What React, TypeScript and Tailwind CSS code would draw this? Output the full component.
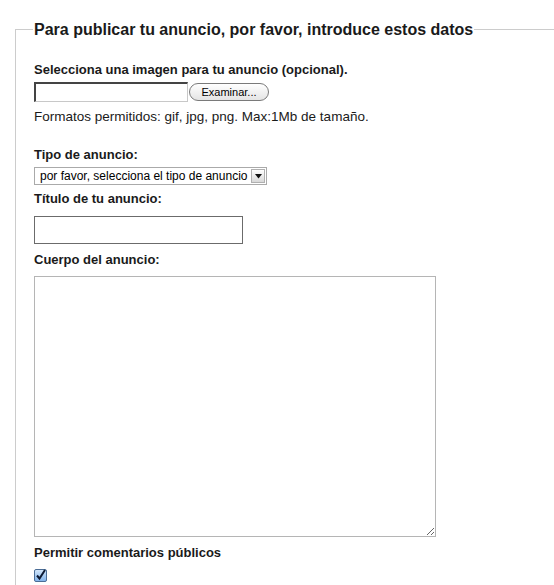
export default function App() {
  return (
    <div className="w-[554px] h-[585px] overflow-hidden bg-white font-['Liberation_Sans',Arial,sans-serif] text-[#1a1a1a]">
      <div className="mt-[29px] ml-[15px] w-[560px] h-[600px] border-l border-t border-[#cccccc] pl-[18px]">
        <div className="-mt-[10px] -ml-px w-fit bg-white px-px text-[16px] font-bold leading-[20px]">
          Para publicar tu anuncio, por favor, introduce estos datos
        </div>

        <div className="mt-[22px] text-[13px] font-bold leading-4">
          Selecciona una imagen para tu anuncio (opcional).
        </div>
        <div className="mt-[4px] flex items-start">
          <div className="h-[20px] w-[154px] border-l-2 border-t-2 border-b border-r border-l-[#444] border-t-[#444] border-b-[#c8c8c8] border-r-[#c8c8c8] bg-white" />
          <button className="mt-px ml-px flex h-[18px] w-[80px] items-center justify-center rounded-full border border-[#7a7a7a] bg-gradient-to-b from-white to-[#e4e4e4] text-[11px] leading-none text-black">
            Examinar...
          </button>
        </div>
        <div className="mt-[7px] text-[13.5px] leading-4">
          Formatos permitidos: gif, jpg, png. Max:1Mb de tamaño.
        </div>

        <div className="mt-[22px] text-[13px] font-bold leading-4">Tipo de anuncio:</div>
        <div className="mt-[4px] flex h-[18px] w-[233px] items-center border border-[#aaaaaa] bg-white">
          <span className="flex-1 pl-[5px] text-[12px] leading-none text-black">
            por favor, selecciona el tipo de anuncio
          </span>
          <span className="mr-px flex h-[14px] w-[14px] items-center justify-center border border-[#b0b0b0] bg-gradient-to-b from-white to-[#d8d8d8]">
            <svg width="7" height="5" viewBox="0 0 7 5">
              <path d="M0 0h7L3.5 4.5z" fill="#111" />
            </svg>
          </span>
        </div>

        <div className="mt-[6px] text-[13px] font-bold leading-4">Título de tu anuncio:</div>
        <div className="mt-[9px] h-[28px] w-[209px] border border-[#6b6b6b] bg-white" />

        <div className="mt-[8px] text-[13px] font-bold leading-4">Cuerpo del anuncio:</div>
        <textarea
          readOnly
          className="mt-[8px] block h-[261px] w-[402px] resize border border-[#b5b5b5] bg-white outline-none"
        />

        <div className="mt-[8px] text-[13px] font-bold leading-4">Permitir comentarios públicos</div>
        <div className="mt-[8px] h-[13px] w-[13px]">
          <svg width="13" height="13" viewBox="0 0 13 13">
            <defs>
              <linearGradient id="cb" x1="0" y1="0" x2="0" y2="1">
                <stop offset="0" stopColor="#d6e8fb" />
                <stop offset="1" stopColor="#7fb2ea" />
              </linearGradient>
            </defs>
            <rect x="0.5" y="0.5" width="12" height="12" rx="1.5" fill="url(#cb)" stroke="#4b6d96" />
            <path d="M3 6.5l2.5 3L11 1" fill="none" stroke="#0d1a33" strokeWidth="2" />
          </svg>
        </div>
      </div>
    </div>
  );
}
